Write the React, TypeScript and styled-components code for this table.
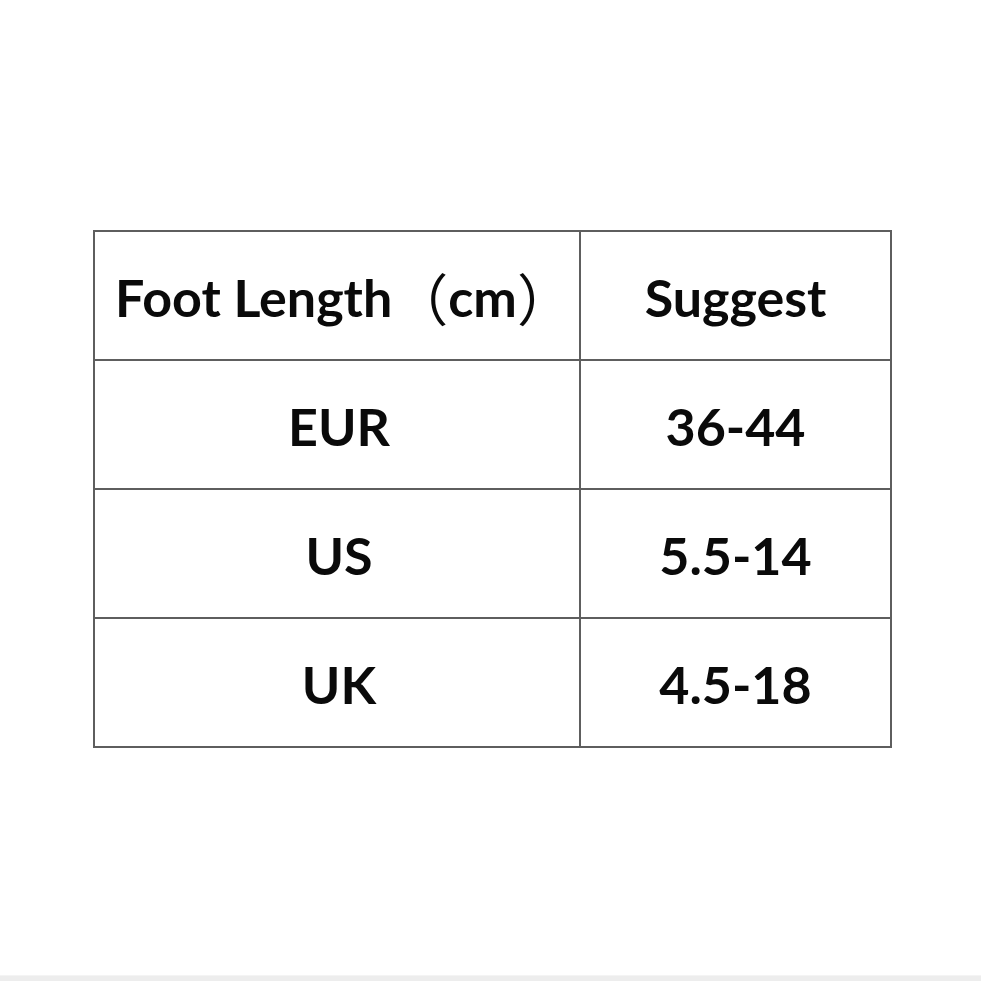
import styled, { createGlobalStyle } from 'styled-components'

const rows = [
  { label: 'EUR', value: '36-44' },
  { label: 'US', value: '5.5-14' },
  { label: 'UK', value: '4.5-18' },
]

const App = () => {
  return (
    <>
      <GlobalStyle />
      <Page>
        <Stage>
          <SizeTable>
            <Cell $indent={14}>
              Foot Length<Paren>（</Paren>cm<Paren>）</Paren>
            </Cell>
            <Cell>Suggest</Cell>
            {rows.map((row) => (
              <Row key={row.label}>
                <Cell $indent={4}>{row.label}</Cell>
                <Cell>{row.value}</Cell>
              </Row>
            ))}
          </SizeTable>
        </Stage>
        <BottomStrip />
      </Page>
    </>
  )
}

export default App

const GlobalStyle = createGlobalStyle`
  html, body {
    margin: 0;
    padding: 0;
    background: #ffffff;
  }
`

const Page = styled.div`
  display: flex;
  flex-direction: column;
  width: 981px;
  height: 981px;
  background: #ffffff;
  font-family: Lato, 'Noto Sans CJK SC', sans-serif;
`

const Stage = styled.div`
  flex: 1;
  padding: 230px 0 0 93px;
`

const SizeTable = styled.div`
  display: grid;
  grid-template-columns: 486px 311px;
  grid-auto-rows: 129px;
  width: 799px;
  border-top: 2px solid #5e5e5e;
  border-left: 2px solid #5e5e5e;
  box-sizing: border-box;
`

const Row = styled.div`
  display: contents;
`

const Cell = styled.div<{ $indent?: number }>`
  display: flex;
  align-items: center;
  justify-content: center;
  box-sizing: border-box;
  border-bottom: 2px solid #5e5e5e;
  border-right: 2px solid #5e5e5e;
  padding-top: 2px;
  padding-left: ${({ $indent = 0 }) => $indent}px;
  font-size: 52px;
  font-weight: 700;
  color: #0a0a0a;
  white-space: nowrap;
`

const Paren = styled.span`
  font-family: 'Noto Sans CJK SC', sans-serif;
  font-size: 56px;
  font-weight: 400;
`

const BottomStrip = styled.div`
  height: 5px;
  background: #ededed;
  border-top: 1px solid #f4f4f4;
`
